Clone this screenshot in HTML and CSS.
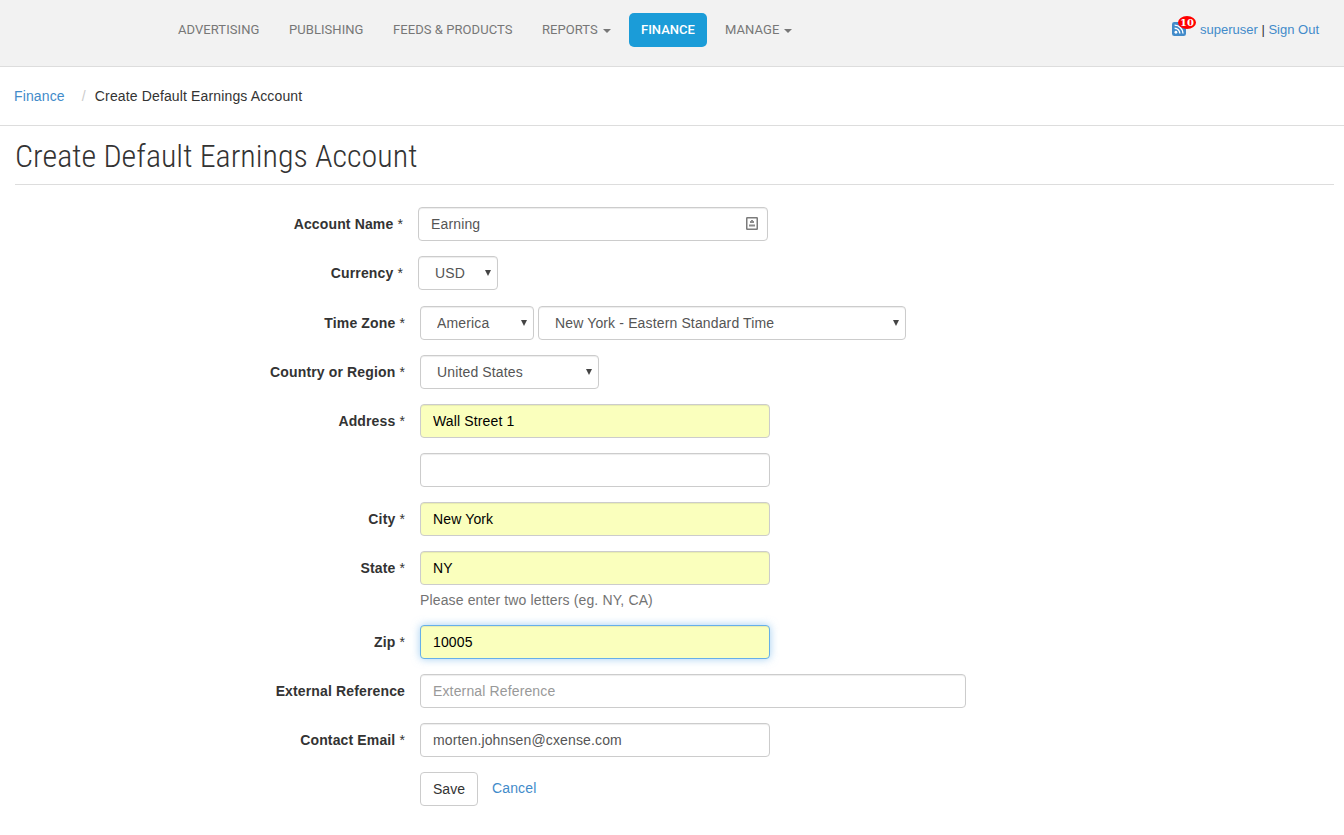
FILE: index.html
```html
<!DOCTYPE html>
<html lang="en">
<head>
  <meta charset="UTF-8" />
  <meta name="viewport" content="width=device-width, initial-scale=1.0" />
  <title>Create Default Earnings Account</title>
  <link rel="stylesheet" href="styles.css">
</head>
<body>

<header class="navbar">
  <nav class="nav">
    <a href="#" class="w-adv">ADVERTISING</a>
    <a href="#" class="w-pub">PUBLISHING</a>
    <a href="#" class="w-feeds">FEEDS &amp; PRODUCTS</a>
    <a href="#" class="w-rep">REPORTS<b class="caret"></b></a>
    <a href="#" class="w-fin active">FINANCE</a>
    <a href="#" class="w-man">MANAGE<b class="caret"></b></a>
  </nav>
  <div class="user">
    <a href="#" class="feed">
      <svg width="14" height="14" viewBox="0 0 15 15">
        <rect x="0" y="0" width="15" height="15" rx="2.5" fill="#428bca"/>
        <circle cx="4.2" cy="11" r="1.5" fill="#fff"/>
        <path d="M2.8 6.7a5.6 5.6 0 0 1 5.6 5.6M2.8 3.4a9 9 0 0 1 9 9" fill="none" stroke="#fff" stroke-width="1.5"/>
      </svg>
      <span class="count">10</span>
    </a>
    <span class="links"><a href="#">superuser</a> | <a href="#">Sign Out</a></span>
  </div>
</header>

<ol class="breadcrumb">
  <li><a href="#">Finance</a></li>
  <li>Create Default Earnings Account</li>
</ol>

<main>
  <h1>Create Default Earnings Account</h1>

  <form>
    <div class="form-group narrow">
      <label for="name">Account Name <i>*</i></label>
      <div class="field">
        <input type="text" id="name" class="control" value="Earning">
        <svg class="card" width="12" height="13" viewBox="0 0 12 13">
          <rect x="0.75" y="0.75" width="10.5" height="11.5" rx="0.5" fill="#fff" stroke="#7b7b7b" stroke-width="1.5"/>
          <path d="M5 3h2v1h1v2H4V4h1zM3 7.5h6v2H3z" fill="#8c8c8c"/>
        </svg>
      </div>
    </div>
    <div class="form-group narrow currency">
      <label for="currency">Currency <i>*</i></label>
      <div class="select s-currency"><select id="currency" class="control"><option>USD</option></select></div>
    </div>
    <div class="form-group">
      <label for="zone">Time Zone <i>*</i></label>
      <div class="select s-region"><select id="zone" class="control"><option>America</option></select></div>
      <div class="select s-zone"><select class="control"><option>New York - Eastern Standard Time</option></select></div>
    </div>
    <div class="form-group">
      <label for="country">Country or Region <i>*</i></label>
      <div class="select s-country"><select id="country" class="control"><option>United States</option></select></div>
    </div>
    <div class="form-group">
      <label for="address">Address <i>*</i></label>
      <div class="field"><input type="text" id="address" class="control filled" value="Wall Street 1"></div>
    </div>
    <div class="form-group">
      <label></label>
      <div class="field"><input type="text" class="control"></div>
    </div>
    <div class="form-group">
      <label for="city">City <i>*</i></label>
      <div class="field"><input type="text" id="city" class="control filled" value="New York"></div>
    </div>
    <div class="form-group">
      <label for="state">State <i>*</i></label>
      <div class="field">
        <input type="text" id="state" class="control filled" value="NY">
        <p class="help">Please enter two letters (eg. NY, CA)</p>
      </div>
    </div>
    <div class="form-group">
      <label for="zip">Zip <i>*</i></label>
      <div class="field"><input type="text" id="zip" class="control filled focused" value="10005"></div>
    </div>
    <div class="form-group">
      <label for="ref">External Reference</label>
      <div class="field wide"><input type="text" id="ref" class="control" placeholder="External Reference"></div>
    </div>
    <div class="form-group">
      <label for="email">Contact Email <i>*</i></label>
      <div class="field"><input type="text" id="email" class="control" value="morten.johnsen@cxense.com"></div>
    </div>
    <div class="form-group">
      <label></label>
      <button type="button" class="btn">Save</button>
      <a href="#" class="cancel">Cancel</a>
    </div>
  </form>
</main>

</body>
</html>
```
FILE: styles.css
```css
* {
  box-sizing: border-box;
}
body {
  margin: 0;
  font-family: Arial, 'Liberation Sans', sans-serif;
  font-size: 14px;
  line-height: 20px;
  letter-spacing: 0.14px;
  color: #333;
  background: #fff;
}
a {
  color: #428bca;
  text-decoration: none;
}

/* Top bar */
.navbar {
  display: flex;
  justify-content: space-between;
  height: 67px;
  padding: 13px 25px 0 166px;
  background: #f2f2f2;
  border-bottom: 1px solid #ddd;
}
.nav {
  display: flex;
  gap: 6px;
  letter-spacing: 0.06px;
}
.nav a {
  height: 34px;
  padding: 0 12px;
  border-radius: 5px;
  font: 13px/34px Roboto, sans-serif;
  color: #777;
  white-space: nowrap;
}
.nav .active {
  background: #1b9cd8;
  color: #fff;
  font-weight: 500;
  letter-spacing: 0;
}
.w-adv { width: 105px; }
.w-pub { width: 98px; }
.w-feeds { width: 143px; }
.w-rep { width: 93px; }
.w-fin { width: 78px; }
.w-man { width: 91px; }
.caret {
  display: inline-block;
  margin-left: 5px;
  vertical-align: 1px;
  border-top: 4px solid #777;
  border-left: 4px solid transparent;
  border-right: 4px solid transparent;
}
.user {
  display: flex;
  font-size: 13px;
  letter-spacing: 0;
}
.feed {
  position: relative;
  width: 28px;
  height: 24px;
  padding-top: 9px;
}
.feed svg {
  display: block;
}
.count {
  position: absolute;
  top: 3px;
  left: 6px;
  width: 18px;
  height: 13px;
  border-radius: 50%;
  background: #f00;
  color: #fff;
  font: bold 10px/13px 'DejaVu Serif', serif;
  text-align: center;
}
.links {
  padding-top: 7px;
}

.breadcrumb {
  display: flex;
  height: 59px;
  margin: 0;
  padding: 19px 14px 0;
  list-style: none;
  border-bottom: 1px solid #ddd;
}
.breadcrumb li + li::before {
  content: "/";
  padding: 0 9px 0 17px;
  color: #ccc;
}

main {
  padding: 0 10px 0 15px;
}
h1 {
  height: 59px;
  margin: 0 0 22px;
  padding-top: 12px;
  border-bottom: 1px solid #ddd;
  font: 300 32px/36px Roboto, sans-serif;
  font-stretch: 75%;
  letter-spacing: 0;
  white-space: nowrap;
}

/* Form rows */
.form-group {
  display: flex;
  margin-bottom: 15px;
}
.form-group label {
  width: 390px;
  margin-right: 15px;
  padding-top: 7px;
  text-align: right;
  font-weight: bold;
}
.form-group label i {
  font-style: normal;
  font-weight: normal;
}
.narrow label {
  width: 388px;
}
.currency {
  margin-bottom: 16px;
}
.field {
  position: relative;
  width: 350px;
}
.wide {
  width: 546px;
}
.control {
  display: block;
  width: 100%;
  height: 34px;
  padding: 6px 12px;
  border: 1px solid #ccc;
  border-radius: 4px;
  background: #fff;
  box-shadow: inset 0 1px 1px rgba(0, 0, 0, 0.075);
  color: #555;
  font: inherit;
  letter-spacing: inherit;
  outline: none;
}
.control::placeholder {
  color: #999;
}
.filled {
  background: #faffbd;
  color: #000;
}
.focused {
  border-color: #66afe9;
  box-shadow: inset 0 1px 1px rgba(0, 0, 0, 0.075), 0 0 8px rgba(102, 175, 233, 0.6);
}
.card {
  position: absolute;
  top: 10px;
  right: 10px;
}
.help {
  margin: 5px 0 0;
  height: 20px;
  color: #737373;
}
.select {
  position: relative;
}
.select select {
  appearance: none;
  padding-left: 16px;
}
.select::after {
  content: "";
  position: absolute;
  top: 14px;
  right: 7px;
  border-top: 6px solid #444;
  border-left: 3.5px solid transparent;
  border-right: 3.5px solid transparent;
}
.s-currency { width: 80px; }
.s-region { width: 114px; margin-right: 4px; }
.s-zone { width: 368px; }
.s-country { width: 179px; }

.btn {
  width: 58px;
  height: 34px;
  padding: 0;
  border: 1px solid #ccc;
  border-radius: 4px;
  background: #fff;
  color: #333;
  font: inherit;
}
.cancel {
  padding: 6px 14px;
}
```
